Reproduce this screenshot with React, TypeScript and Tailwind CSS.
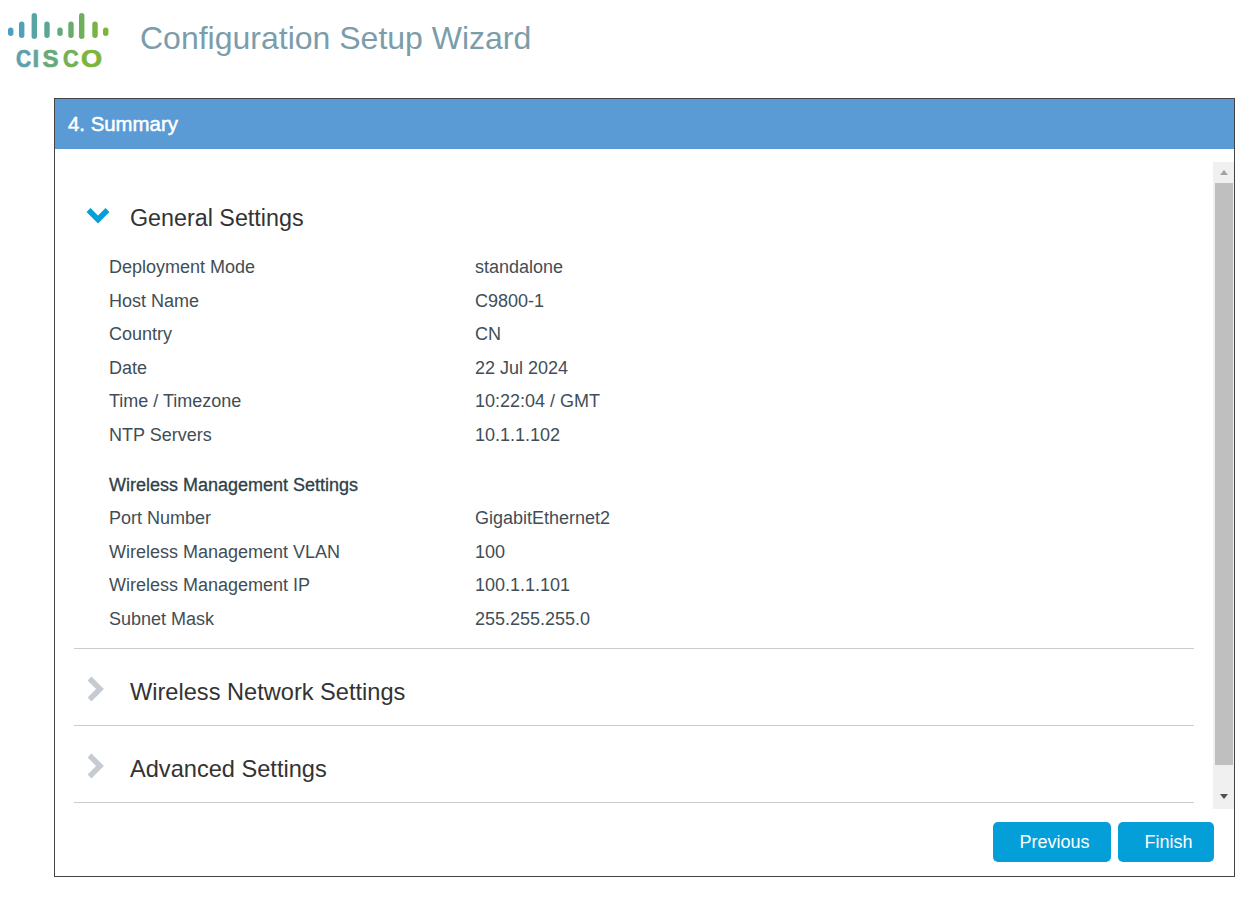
const general = [
  ["Deployment Mode", "standalone"],
  ["Host Name", "C9800-1"],
  ["Country", "CN"],
  ["Date", "22 Jul 2024"],
  ["Time / Timezone", "10:22:04 / GMT"],
  ["NTP Servers", "10.1.1.102"],
];
const wireless = [
  ["Port Number", "GigabitEthernet2"],
  ["Wireless Management VLAN", "100"],
  ["Wireless Management IP", "100.1.1.101"],
  ["Subnet Mask", "255.255.255.0"],
];

function Logo() {
  const bars: [number, number, number][] = [
    [10.7, 27.5, 8.5], [21.7, 21.5, 16.5], [34.3, 13, 26], [47, 21.5, 16.5], [60, 27.5, 8.5], [71, 21.5, 16.5], [81.7, 13, 26], [95, 21.5, 16.5], [105.7, 27.5, 8.5],
  ];
  const letters: [string, number, number, string][] = [
    ["C", 16, 0.87, "#5aa1ae"],
    ["I", 32.5, 1, "#66a59a"],
    ["S", 42.5, 1, "#68aa78"],
    ["C", 63, 0.9, "#74b050"],
    ["O", 81, 1.13, "#7cb53a"],
  ];
  return (
    <svg width="112" height="72" viewBox="0 0 112 72" className="shrink-0">
      <defs>
        <linearGradient id="cg" gradientUnits="userSpaceOnUse" x1="8" y1="0" x2="108" y2="0">
          <stop offset="0" stopColor="#4a9fc9" />
          <stop offset="0.5" stopColor="#62a983" />
          <stop offset="1" stopColor="#7fb62f" />
        </linearGradient>
      </defs>
      {bars.map(([x, y, h], i) => (
        <rect key={i} x={x - 2.7} y={y} width="5.4" height={h} rx="2.7" fill="url(#cg)" />
      ))}
      {letters.map(([c, x, s, f], i) => (
        <text key={i} transform={`translate(${x} 67) scale(${s} 1)`} fontFamily="Liberation Sans, sans-serif" fontWeight="700" fontSize="24" fill={f} stroke={f} strokeWidth="0.7">{c}</text>
      ))}
    </svg>
  );
}

function Chevron({ open }: { open?: boolean }) {
  return open ? (
    <svg width="26" height="18" viewBox="0 0 26 18" className="shrink-0">
      <path d="M3.5 4 L13 13.5 L22.5 4" fill="none" stroke="#049fd9" strokeWidth="5.5" />
    </svg>
  ) : (
    <svg width="20" height="28" viewBox="0 0 20 28" className="shrink-0">
      <path d="M3.5 3.5 L14 14 L3.5 24.5" fill="none" stroke="#c6cad1" strokeWidth="5.5" />
    </svg>
  );
}

function Row({ k, v }: { k: string; v: string }) {
  return (
    <div className="flex h-[33.5px] items-center text-[18px] text-[#3f4e56]">
      <div className="w-[366px]">{k}</div>
      <div>{v}</div>
    </div>
  );
}

function Collapsed({ title }: { title: string }) {
  return (
    <div className="flex h-[77px] items-center border-b border-[#cccccc] pl-[12px]">
      <div className="mt-[3px] w-[44px]"><Chevron /></div>
      <div className="pt-[11px] text-[23.6px] text-[#333333]">{title}</div>
    </div>
  );
}

export default function App() {
  return (
    <div className="h-[900px] w-[1250px] overflow-hidden bg-white font-['Liberation_Sans',sans-serif]">
      <header className="flex h-[98px] items-start">
        <Logo />
        <h1 className="mt-[19px] ml-[28px] text-[32px] leading-[38px] font-normal text-[#7b9dab]">Configuration Setup Wizard</h1>
      </header>
      <main className="ml-[54px] flex h-[779px] w-[1181px] flex-col border border-[#444444]">
        <div className="flex h-[50px] items-center bg-[#5b9bd5] pl-[13px] text-[20.4px] text-white [-webkit-text-stroke:0.5px_#ffffff]">4. Summary</div>
        <div className="flex flex-1 pt-[13px] pl-[19px]">
          <div className="w-[1121px]">
            <div className="border-b border-[#cccccc] pb-[12px]">
              <div className="flex h-[82px] items-center pt-[30px] pl-[11px]">
                <div className="-mt-[6px] w-[45px]"><Chevron open /></div>
                <div className="text-[23.3px] text-[#333333]">General Settings</div>
              </div>
              <div className="mt-[7px] pl-[35px]">
                {general.map(([k, v]) => <Row key={k} k={k} v={v} />)}
                <div className="mt-[17px] flex h-[33px] items-center text-[18px] font-medium text-[#2f4047] [-webkit-text-stroke:0.3px_#2f4047]">Wireless Management Settings</div>
                {wireless.map(([k, v]) => <Row key={k} k={k} v={v} />)}
              </div>
            </div>
            <Collapsed title="Wireless Network Settings" />
            <Collapsed title="Advanced Settings" />
          </div>
          <div className="ml-[19px] flex flex-col self-start">
            <div className="flex h-[647px] w-[21px] flex-col items-center bg-[#f0f0f0]">
              <div className="flex h-[21px] items-center justify-center">
                <div className="h-0 w-0 border-x-[4.5px] border-b-[5px] border-x-transparent border-b-[#a3a3a3]" />
              </div>
              <div className="h-[582px] w-[18px] bg-[#bfbfbf]" />
              <div className="flex h-[44px] items-start justify-center pt-[29px]">
                <div className="h-0 w-0 border-x-[4.5px] border-t-[5px] border-x-transparent border-t-[#505050]" />
              </div>
            </div>
          </div>
        </div>
        <div className="flex justify-end gap-[7px] pr-[20px] pb-[14px]">
          <button className="h-[40px] w-[118px] rounded-[5px] bg-[#049fd9] pl-[5px] text-[18px] text-white">Previous</button>
          <button className="h-[40px] w-[96px] rounded-[5px] bg-[#049fd9] pl-[5px] text-[18px] text-white">Finish</button>
        </div>
      </main>
    </div>
  );
}
